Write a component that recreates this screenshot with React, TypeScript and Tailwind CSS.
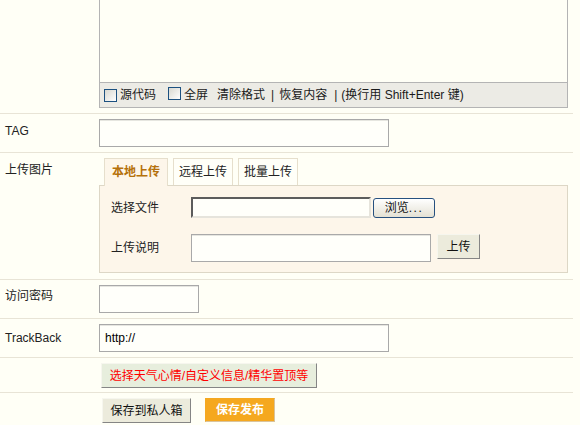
import React from "react";

function Check() {
  return (
    <span className="inline-block w-[13px] h-[13px] shrink-0 border border-[#1c5180] bg-linear-to-br from-[#d8d8d0] to-white" />
  );
}

function Row({
  label,
  labelClass,
  contentClass,
  last,
  children,
}: {
  label?: string;
  labelClass?: string;
  contentClass?: string;
  last?: boolean;
  children: React.ReactNode;
}) {
  return (
    <div className={last ? "flex" : "flex border-b border-[#e8e4d6]"}>
      <div className={"w-[99px] shrink-0 pl-[5px] text-[#222] " + (labelClass ?? "")}>{label}</div>
      <div className={"flex-1 " + (contentClass ?? "")}>{children}</div>
    </div>
  );
}

const textBox =
  "border border-[#a9a9a9] bg-[#fffffa] shadow-[inset_0_1px_0_#e6e6e0]";
const flatBtn =
  "flex items-center justify-center border border-t-[#f6f6ee] border-l-[#f6f6ee] border-r-[#858585] border-b-[#858585]";

export default function App() {
  return (
    <div className="min-h-screen w-full bg-[#fffff6] text-[12px] leading-[14px] text-[#222] font-['Liberation_Sans','Noto_Sans_CJK_SC',sans-serif]">
      <div className="w-[573px]">
        {/* editor */}
        <Row contentClass="pb-[5px]">
          <div className="w-[469px] border-x border-b border-[#b4b4b4]">
            <div className="h-[82px]" />
            <div className="h-[25px] border-t border-[#b4b4b4] bg-[#ecebe5] flex items-center pl-[4px] text-[#1a1a1a]">
              <Check />
              <span className="ml-[3px]">源代码</span>
              <span className="ml-[12px]">
                <Check />
              </span>
              <span className="ml-[3px]">全屏</span>
              <span className="ml-[9px]">清除格式</span>
              <span className="ml-[6px] mr-[5px]">|</span>
              <span>恢复内容</span>
              <span className="ml-[7px] mr-[4px]">|</span>
              <span>(换行用 Shift+Enter 键)</span>
            </div>
          </div>
        </Row>

        {/* tag */}
        <Row label="TAG" labelClass="pt-[10px]" contentClass="py-[5px]">
          <div className={"w-[290px] h-[28px] " + textBox} />
        </Row>

        {/* image upload */}
        <Row label="上传图片" labelClass="pt-[10px]" contentClass="pt-[5px] pb-[6px]">
          <div className="flex items-end pl-[5px] gap-[5px]">
            <div className="relative z-10 -mb-px w-[64px] h-[28px] border border-b-0 border-[#e6dfcc] bg-[#fdf6ea] flex items-center justify-center font-bold text-[#b5710b] pb-px">
              本地上传
            </div>
            <div className="w-[60px] h-[27px] border border-b-0 border-[#e6dfcc] bg-[#fffff8] flex items-center justify-center">
              远程上传
            </div>
            <div className="w-[60px] h-[27px] border border-b-0 border-[#e6dfcc] bg-[#fffff8] flex items-center justify-center">
              批量上传
            </div>
          </div>
          <div className="w-[469px] border border-[#ddd7c6] bg-[#fdf6ea] pt-[11px] pb-[10px] pl-[11px]">
            <div className="flex items-center h-[21px]">
              <span className="w-[80px]">选择文件</span>
              <div className="w-[180px] h-[21px] border-2 border-t-[#5c5c5c] border-l-[#5c5c5c] border-r-[#e6e4dc] border-b-[#e6e4dc] bg-[#fffffa]" />
              <div className="ml-[2px] w-[62px] h-[20px] rounded-[3px] border border-[#26507f] bg-linear-to-b from-white to-[#e4e1d4] flex items-center justify-center text-[#111]">
                浏览<span className="tracking-[1.5px]">...</span>
              </div>
            </div>
            <div className="flex items-start mt-[16px]">
              <span className="w-[80px] h-[28px] flex items-center">上传说明</span>
              <div className={"w-[240px] h-[28px] " + textBox} />
              <div className={"ml-[6px] w-[43px] h-[25px] bg-[#ecebdc] text-[#111] " + flatBtn}>上传</div>
            </div>
          </div>
        </Row>

        {/* password */}
        <Row label="访问密码" labelClass="pt-[9px]" contentClass="py-[5px]">
          <div className={"w-[100px] h-[28px] " + textBox} />
        </Row>

        {/* trackback */}
        <Row label="TrackBack" labelClass="pt-[12px]" contentClass="py-[5px]">
          <div className={"w-[290px] h-[28px] flex items-center pl-[5px] text-black " + textBox}>http://</div>
        </Row>

        {/* extra options */}
        <Row contentClass="pt-[5px] pb-[4px]">
          <div className={"ml-[2px] w-[216px] h-[25px] bg-[#e7eedd] text-[#ff0000] " + flatBtn}>
            选择天气心情/自定义信息/精华置顶等
          </div>
        </Row>

        {/* actions */}
        <Row last contentClass="pt-[5px] flex items-start">
          <div className={"ml-[3px] w-[89px] h-[25px] bg-[#ecebdc] text-[#111] " + flatBtn}>保存到私人箱</div>
          <div className="ml-[14px] w-[70px] h-[24px] bg-[#f5a81f] border border-t-[#f5a81f] border-l-[#f5a81f] border-r-[#d9c39c] border-b-[#d9c39c] flex items-center justify-center font-bold text-white">
            保存发布
          </div>
        </Row>
      </div>
    </div>
  );
}
